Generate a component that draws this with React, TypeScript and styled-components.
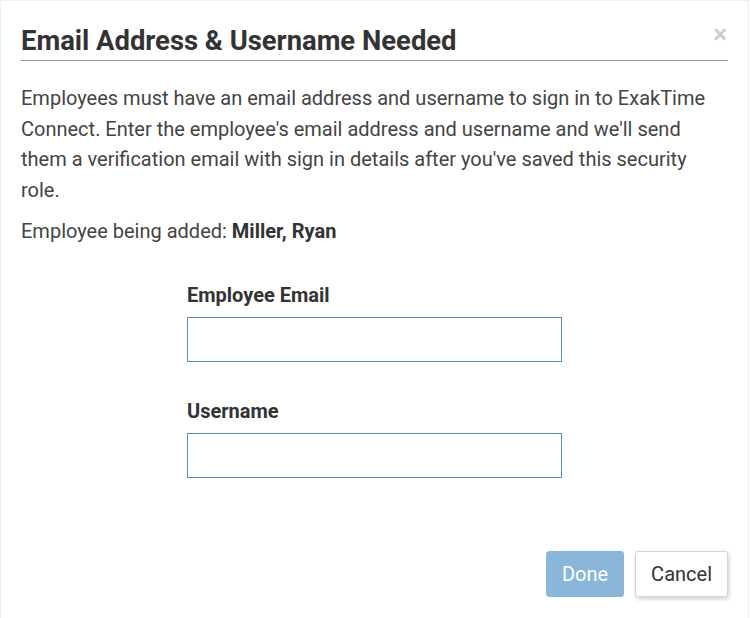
import styled, { createGlobalStyle } from "styled-components";

const GlobalStyle = createGlobalStyle`
  body {
    margin: 0;
    background: #fff;
    font-family: Roboto, "Liberation Sans", Arial, sans-serif;
  }
`;

function App() {
  return (
    <>
      <GlobalStyle />
      <Modal>
        <Header>
          <Title>Email Address &amp; Username Needed</Title>
          <Close aria-label="Close">×</Close>
        </Header>
        <Body>
          <Intro>
            Employees must have an email address and username to sign in to ExakTime
            Connect. Enter the employee's email address and username and we'll send
            them a verification email with sign in details after you've saved this security
            role.
          </Intro>
          <Intro>
            Employee being added: <strong>Miller, Ryan</strong>
          </Intro>
          <Form>
            <Field>
              <Label htmlFor="email">Employee Email</Label>
              <Input id="email" type="email" />
            </Field>
            <Field>
              <Label htmlFor="username">Username</Label>
              <Input id="username" type="text" />
            </Field>
          </Form>
        </Body>
        <Footer>
          <Button $primary disabled>Done</Button>
          <Button>Cancel</Button>
        </Footer>
      </Modal>
    </>
  );
}

export default App;

const Modal = styled.div`
  box-sizing: border-box;
  width: 749px;
  height: 618px;
  border: 1px solid #f0f0f0;
  border-bottom: none;
  display: flex;
  flex-direction: column;
  color: #444;
`

const Header = styled.div`
  margin: 0 20px;
  padding-top: 22px;
  border-bottom: 1px solid #9a9a9a;
  display: flex;
  justify-content: space-between;
  align-items: flex-start;
`

const Title = styled.h1`
  margin: 0;
  font-size: 27.4px;
  font-weight: 700;
  color: #333;
  line-height: 36px;
  padding-bottom: 1px;
`

const Close = styled.button`
  border: none;
  background: none;
  padding: 0;
  margin: -2px 1px 0 0;
  font-size: 26px;
  font-weight: 700;
  line-height: 26px;
  color: #cdcdcd;
  cursor: pointer;
  font-family: inherit;
`

const Body = styled.div`
  padding: 0 20px;
  flex: 1;
`

const Intro = styled.p`
  margin: 22px 0 0;
  font-size: 20px;
  line-height: 30.5px;
  color: #444;

  & + & {
    margin-top: 11px;
  }

  strong {
    color: #333;
  }
`

const Form = styled.div`
  width: 375px;
  margin: 36px auto 0;
  display: flex;
  flex-direction: column;
  gap: 37px;
`

const Field = styled.div`
  display: flex;
  flex-direction: column;
`

const Label = styled.label`
  font-size: 20px;
  font-weight: 700;
  color: #333;
  line-height: 24px;
  margin-bottom: 10px;
`

const Input = styled.input`
  box-sizing: border-box;
  width: 375px;
  height: 45px;
  border: 1px solid #4f8fc6;
  border-radius: 0;
  padding: 0 10px;
  font-size: 20px;
  font-family: inherit;
  outline: none;
`

const Footer = styled.div`
  display: flex;
  justify-content: flex-end;
  gap: 11px;
  padding: 0 20px 21px 0;
`

const Button = styled.button<{ $primary?: boolean }>`
  box-sizing: border-box;
  height: 46px;
  padding: 0 15px;
  font-size: 20px;
  font-family: inherit;
  border-radius: 3px;
  cursor: pointer;
  border: 1px solid ${p => (p.$primary ? "#8ab6da" : "#d6d6d6")};
  background: ${p => (p.$primary ? "#8ab6da" : "#fff")};
  color: ${p => (p.$primary ? "#fff" : "#333")};
  box-shadow: ${p => (p.$primary ? "none" : "1px 2px 4px rgba(0,0,0,0.2)")};
`
